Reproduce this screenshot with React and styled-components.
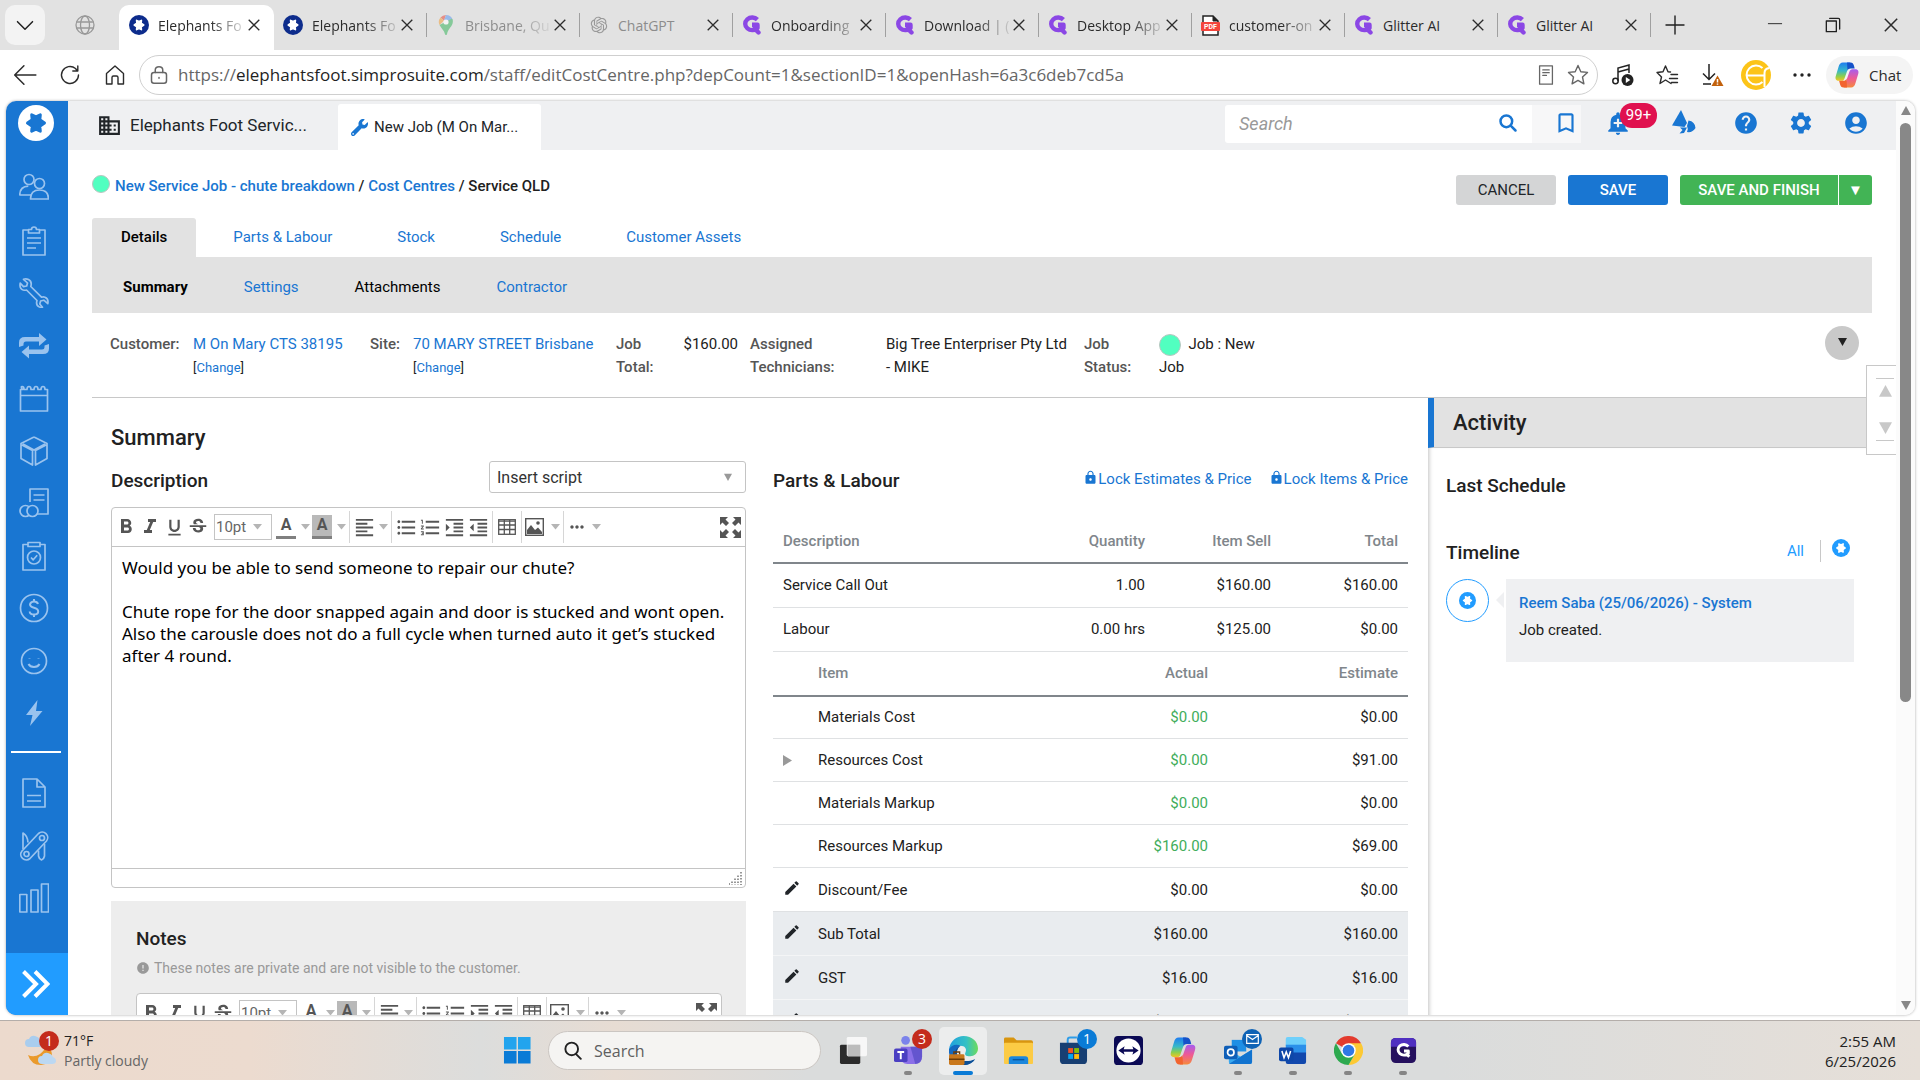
import { useState } from "react";
import styled, { createGlobalStyle, css } from "styled-components";
import {
  MdBusiness,
  MdAddAlert,
  MdHelp,
  MdSettings,
  MdAccountCircle,
  MdBookmarkBorder,
  MdEdit,
  MdError,
  MdLock,
  MdFormatBold,
  MdFormatItalic,
  MdFormatUnderlined,
  MdStrikethroughS,
  MdFormatAlignLeft,
  MdFormatListBulleted,
  MdFormatListNumbered,
  MdFormatIndentIncrease,
  MdFormatIndentDecrease,
  MdMoreHoriz,
} from "react-icons/md";
import { FaWrench } from "react-icons/fa";
import { RiOpenaiFill } from "react-icons/ri";

const GlobalStyle = createGlobalStyle`
  * { box-sizing: border-box; }
  body {
    margin: 0;
    background: #fff;
    color: #212121;
    font-family: Roboto, sans-serif;
    font-size: 15px;
  }
  button, input, select, textarea {
    font: inherit;
    color: inherit;
    margin: 0;
  }
  button {
    border: none;
    background: none;
    padding: 0;
    cursor: pointer;
  }
  a { color: #1976d2; text-decoration: none; }
  svg { display: block; flex: none; }
`;

const Screen = styled.div`
  height: 100vh;
  display: flex;
  flex-direction: column;
  overflow: hidden;
`;

/* ---------- browser chrome ---------- */

const TabStrip = styled.div`
  display: flex;
  align-items: stretch;
  height: 50px;
  padding: 5px 0 0 5px;
  background: #e2e2e2;
  font-family: "Open Sans", sans-serif;
  font-size: 14px;
`;

const TabMenuButton = styled.button`
  width: 40px;
  height: 40px;
  border-radius: 10px;
  background: #f3f3f3;
  display: grid;
  place-items: center;
`;

const PinnedTab = styled.div`
  width: 74px;
  display: grid;
  place-items: center;
  padding: 0 0 5px 6px;
`;

const TabItem = styled.div`
  flex: 0 1 ${({ $active }) => ($active ? 155 : 153)}px;
  min-width: 0;
  display: flex;
  align-items: center;
  gap: 9px;
  padding: 0 14px 5px ${({ $active }) => ($active ? 10 : 9)}px;
  color: ${({ $muted }) => ($muted ? "#8c8c8c" : "#2b2b2b")};
  background: ${({ $active }) => ($active ? "#fff" : "transparent")};
  border-radius: 10px 10px 0 0;
  position: relative;
  ${({ $line }) =>
    $line &&
    css`
      &::after {
        content: "";
        position: absolute;
        right: 0;
        top: 8px;
        height: 24px;
        border-right: 1px solid #a0a0a0;
      }
    `}
`;

const TabTitle = styled.span`
  flex: 1;
  white-space: nowrap;
  ${({ $fade }) =>
    $fade &&
    css`
      mask-image: linear-gradient(90deg, #000 60%, transparent 105%);
    `}
`;

const IconButton = styled.button`
  width: ${({ $w }) => $w || 28}px;
  flex: none;
  display: grid;
  place-items: center;
`;

const TabClose = styled(IconButton)`
  margin-left: -6px;
`;

const NewTab = styled(IconButton)`
  padding-bottom: 5px;
`;

const WindowControls = styled.div`
  margin-left: auto;
  display: flex;
  padding-bottom: 5px;
`;

const AddressRow = styled.div`
  display: flex;
  align-items: center;
  height: 51px;
  padding: 0 7px 2px 3px;
  color: #2b2b2b;
  font-family: "Open Sans", sans-serif;
`;

const AddressBar = styled.div`
  flex: 1;
  height: 40px;
  display: flex;
  align-items: center;
  gap: 9px;
  margin: 0 3px 0 2px;
  padding: 0 7px 0 9px;
  border: 1px solid #cfcfcf;
  border-radius: 20px;
  color: #666;
`;

const Url = styled.span`
  flex: 1;
  font-size: 17px;
  white-space: nowrap;
  b {
    font-weight: 400;
    color: #1f1f1f;
  }
`;

const ChatPill = styled.button`
  display: flex;
  align-items: center;
  gap: 8px;
  height: 38px;
  width: 87px;
  padding-left: 7px;
  border-radius: 19px;
  background: #f4f4f4;
  font-size: 15px;
`;

/* ---------- simPRO page ---------- */

const PageFrame = styled.div`
  flex: 1;
  min-height: 0;
  margin: 0 5px 5px 6px;
  display: flex;
  overflow: hidden;
  border-radius: 10px;
  box-shadow: 0 0 3px rgba(0, 0, 0, 0.35);
`;

const Sidebar = styled.nav`
  width: 62px;
  flex: none;
  display: flex;
  flex-direction: column;
  align-items: flex-start;
  background: #1976d2;
  color: #9ac3ee;
`;

const SidebarLogo = styled.a`
  margin: 4px 0 21px 12px;
  height: 36px;
`;

const SidebarLink = styled.a`
  width: 56px;
  height: 52px;
  display: grid;
  place-items: center;
  margin-top: ${({ $gap }) => ($gap ? 1 : 0)}px;
  color: inherit;
`;

const SidebarRule = styled.hr`
  width: 50px;
  margin: 12px 0 14px 5px;
  border: none;
  border-top: 2px solid #fff;
`;

const SidebarExpand = styled.button`
  margin-top: auto;
  width: 100%;
  height: 62px;
  display: grid;
  place-items: center;
  padding-right: 2px;
  background: #219cff;
  color: #fff;
`;

const Page = styled.div`
  flex: 1;
  min-width: 0;
  display: flex;
  flex-direction: column;
  position: relative;
`;

const TopBar = styled.header`
  height: 49px;
  flex: none;
  display: flex;
  align-items: flex-end;
  background: #eff0f2;
  color: #1976d2;
`;

const CompanyName = styled.div`
  width: 269px;
  height: 46px;
  display: flex;
  align-items: center;
  gap: 8px;
  padding: 0 0 4px 29px;
  font-size: 17px;
  color: #212529;
`;

const JobTab = styled.div`
  width: 203px;
  height: 46px;
  display: flex;
  align-items: center;
  gap: 6px;
  padding-left: 13px;
  margin-left: 1px;
  background: #fff;
  border-radius: 3px 3px 0 0;
  color: #1976d2;
  span {
    color: #212529;
  }
`;

const SearchBox = styled.form`
  align-self: flex-start;
  margin: 4px 0 0 auto;
  display: flex;
  align-items: center;
  width: 307px;
  height: 38px;
  padding: 0 14px 2px;
  background: #fff;
  border-radius: 3px 0 0 3px;
  input {
    flex: 1;
    min-width: 0;
    border: none;
    outline: none;
    padding: 0;
    font-size: 18px;
    &::placeholder {
      color: #999;
      font-style: italic;
    }
  }
`;

const BookmarkButton = styled.button`
  align-self: flex-start;
  margin: 4px 24px 0 0;
  width: 49px;
  height: 38px;
  padding: 0 0 2px 21px;
  background: #f7f7f8;
`;

const TopIcons = styled.div`
  display: flex;
  gap: 27px;
  padding: 0 25px 14px 0;
`;

const TopIcon = styled.button`
  position: relative;
  width: ${({ $w }) => $w || 28}px;
  display: flex;
`;

const AlertBadge = styled.span`
  position: absolute;
  left: 15px;
  top: -7px;
  width: 37px;
  height: 25px;
  border-radius: 12px;
  background: #e0114f;
  color: #fff;
  line-height: 25px;
`;

const Content = styled.main`
  flex: 1;
  min-height: 0;
  padding: 0 24px;
  background: #fff;
`;

const TitleRow = styled.div`
  display: flex;
  justify-content: space-between;
  padding-top: 25px;
  height: 68px;
`;

const Breadcrumb = styled.div`
  display: flex;
  align-items: flex-start;
  gap: 5px;
  font-weight: 500;
  line-height: 22px;
`;

const StatusDot = styled.span`
  display: inline-block;
  flex: none;
  width: ${({ $size }) => $size}px;
  height: ${({ $size }) => $size}px;
  border: 1px solid #b9c6c1;
  border-radius: 50%;
  background: #51ffc0;
  vertical-align: middle;
`;

const Actions = styled.div`
  display: flex;
  gap: 12px;
`;

const ActionButton = styled.button`
  height: 30px;
  width: ${({ $w }) => $w || 100}px;
  border-radius: 3px;
  background: ${({ $bg }) => $bg};
  color: ${({ $fg }) => $fg || "#fff"};
  font-weight: ${({ $fg }) => ($fg ? 400 : 500)};
`;

const SplitButton = styled.div`
  display: flex;
  gap: 1px;
  ${ActionButton}:first-child {
    border-radius: 3px 0 0 3px;
  }
  ${ActionButton}:last-child {
    border-radius: 0 3px 3px 0;
  }
`;

const MainTabs = styled.nav`
  display: flex;
  gap: 9px;
  height: 39px;
`;

const MainTab = styled.a`
  height: 39px;
  line-height: 38px;
  padding: 0 ${({ $on }) => ($on ? 29 : 28)}px;
  border-radius: 3px 3px 0 0;
  ${({ $on }) =>
    $on &&
    css`
      background: #e2e2e2;
      color: #000;
      font-weight: 500;
    `}
`;

const SubTabs = styled.nav`
  display: flex;
  gap: 56px;
  height: 56px;
  padding: 0 31px;
  background: #e2e2e2;
  line-height: 60px;
`;

const SubTab = styled.a`
  color: ${({ $dark }) => ($dark ? "#000" : "#1976d2")};
  font-weight: ${({ $on }) => ($on ? 700 : 400)};
`;

const InfoRow = styled.section`
  display: grid;
  grid-template-columns: 83px 177px 43px 203px 67px 67px 136px 198px 75px 130px 1fr;
  height: 85px;
  padding: 20px 13px 0 18px;
  border-bottom: 1px solid #c8c8c8;
  line-height: 23px;
`;

const InfoLabel = styled.div`
  color: #555;
  font-weight: 500;
`;

const InfoValue = styled.div`
  padding-right: 12px;
  text-align: ${({ $right }) => ($right ? "right" : "left")};
  small {
    display: block;
    font-size: 13px;
  }
`;

const RoundButton = styled.button`
  justify-self: end;
  width: 34px;
  height: 34px;
  margin-top: -7px;
  padding-bottom: 3px;
  border-radius: 50%;
  background: #c9c9c9;
  display: grid;
  place-items: center;
`;

const Columns = styled.div`
  display: flex;
  align-items: flex-start;
`;

const Work = styled.div`
  flex: 1;
  min-width: 0;
  padding: 25px 20px 0 19px;
`;

const Split = styled.div`
  display: grid;
  grid-template-columns: 1fr 1fr;
  gap: 27px;
`;

const PageHeading = styled.h1`
  margin: 0;
  font-size: 22px;
  line-height: 30px;
  font-weight: 500;
`;

const Heading = styled.h2`
  margin: 0;
  font-size: 19px;
  line-height: 24px;
  font-weight: 500;
`;

const HeadRow = styled.div`
  display: flex;
  justify-content: space-between;
  align-items: flex-end;
  height: 40px;
`;

const ScriptSelect = styled.div`
  width: 257px;
  height: 32px;
  display: grid;
  align-items: center;
  border: 1px solid #c4c4c4;
  border-radius: 3px;
  select {
    grid-area: 1 / 1;
    height: 30px;
    padding: 0 7px;
    appearance: none;
    border: none;
    background: none;
    font-size: 16px;
    color: #333;
  }
  svg {
    grid-area: 1 / 1;
    justify-self: end;
    margin-right: 13px;
    color: #999;
    pointer-events: none;
  }
`;

const EditorBox = styled.div`
  margin-top: 14px;
  border: 1px solid #c4c4c4;
  border-radius: 4px;
  background: #fff;
`;

const Toolbar = styled.div`
  display: flex;
  align-items: center;
  height: 39px;
  color: #555;
  border-bottom: 1px solid #c4c4c4;
`;

const ToolGroup = styled.div`
  display: flex;
  align-items: center;
  height: 32px;
  padding: 0 2px;
  border-right: ${({ $last }) => ($last ? "none" : "1px solid #d6d6d6")};
`;

const ToolButton = styled.button`
  width: ${({ $w }) => $w || 24}px;
  height: 26px;
  display: flex;
  align-items: center;
  justify-content: ${({ $w }) => ($w ? "space-between" : "center")};
  padding: 0 1px;
`;

const LetterA = styled.span`
  width: 20px;
  height: 24px;
  border-bottom: 3px solid #808080;
  background: ${({ $fill }) => ($fill ? "#b9b9b9" : "none")};
  font-weight: 700;
  font-size: 16px;
  line-height: 20px;
`;

const SizeSelect = styled.div`
  display: grid;
  align-items: center;
  width: 58px;
  height: 26px;
  margin: 0 3px 0 4px;
  border: 1px solid #c4c4c4;
  select {
    grid-area: 1 / 1;
    width: 100%;
    height: 24px;
    padding: 0 1px;
    appearance: none;
    border: none;
    background: none;
    color: #666;
  }
  svg {
    grid-area: 1 / 1;
    justify-self: end;
    margin-right: 9px;
    pointer-events: none;
  }
`;

const Expand = styled.button`
  margin-left: auto;
  padding-right: 4px;
`;

const EditorText = styled.textarea`
  display: block;
  width: 100%;
  height: 321px;
  padding: 10px 8px 0 10px;
  border: none;
  outline: none;
  resize: none;
  overflow: hidden;
  background: none;
  color: #000;
  font-family: "Noto Sans", sans-serif;
  font-size: 17px;
  line-height: 22px;
`;

const EditorStatus = styled.div`
  height: 19px;
  border-top: 1px solid #c4c4c4;
  display: flex;
  justify-content: flex-end;
  align-items: center;
  padding-right: 3px;
`;

const Notes = styled.section`
  margin-top: 13px;
  padding: 26px 24px 60px 25px;
  background: #ededed;
  p {
    display: flex;
    align-items: center;
    gap: 4px;
    margin: 6px 0 0;
    font-size: 14px;
    line-height: 22px;
    color: #999;
  }
`;

const LockLinks = styled.div`
  display: flex;
  gap: 17px;
  padding-bottom: 4px;
  a {
    display: flex;
    align-items: center;
    line-height: 20px;
  }
  svg {
    margin-bottom: 3px;
  }
`;

const TableStack = styled.div`
  margin-top: 26px;
`;

const DataTable = styled.table`
  width: 100%;
  table-layout: fixed;
  border-collapse: collapse;
  th,
  td {
    height: 44px;
    padding: 0 10px;
    text-align: right;
    white-space: nowrap;
  }
  th {
    color: #80868b;
    font-weight: 500;
    border-bottom: 2px solid #80868b;
  }
  td {
    border-bottom: 1px solid #dfe1e3;
  }
  .name {
    text-align: left;
  }
`;

const MoneyRow = styled.tr`
  background: ${({ $shaded }) => ($shaded ? "#e9ecef" : "none")};
  td {
    height: ${({ $edit }) => ($edit ? 44 : 43)}px;
    border-color: ${({ $shaded }) => ($shaded ? "#f4f5f6" : "#dfe1e3")};
  }
  .actual {
    color: ${({ $good }) => ($good ? "#41ad5b" : "inherit")};
  }
`;

const EditButton = styled.button`
  display: block;
  padding-bottom: 4px;
  color: #212529;
`;

const Activity = styled.aside`
  width: 444px;
  flex: none;
`;

const ActivityHead = styled.h1`
  margin: 0;
  height: 50px;
  padding-left: 19px;
  border-left: 6px solid #1976d2;
  border-bottom: 1px solid #c8c8c8;
  background: #e2e2e2;
  font-size: 22px;
  line-height: 49px;
  font-weight: 500;
`;

const ActivityBody = styled.div`
  height: 640px;
  padding: 26px 18px 0;
  box-shadow: inset 4px 0 4px -3px rgba(0, 0, 0, 0.25);
`;

const TimelineHead = styled.div`
  display: flex;
  align-items: flex-end;
  margin-top: 41px;
  padding-right: 4px;
  h2 {
    flex: 1;
  }
  a {
    color: #219cff;
    line-height: 22px;
    padding-right: 16px;
    margin: 0 11px 3px 0;
    border-right: 1px solid #c8c8c8;
  }
  svg {
    margin-bottom: 8px;
  }
`;

const TimelineItem = styled.div`
  display: flex;
  margin-top: 14px;
`;

const Avatar = styled.div`
  width: 43px;
  height: 43px;
  border: 1px solid #219cff;
  border-radius: 50%;
  display: grid;
  place-items: center;
`;

const Pointer = styled.span`
  margin: 13px 2px 0 7px;
  height: 16px;
  border: 8px solid transparent;
  border-left: none;
  border-right-color: #eff0f2;
`;

const TimelineCard = styled.div`
  flex: 1;
  height: 83px;
  padding: 11px 13px;
  background: #eff0f2;
  line-height: 29px;
  a {
    display: block;
    font-weight: 500;
    line-height: 26px;
  }
`;

const ScrollPad = styled.div`
  position: absolute;
  right: 0;
  top: 264px;
  width: 30px;
  height: 90px;
  padding: 12px 2px 13px 9px;
  background: #fff;
  border: 1px solid #c8c8c8;
  border-right: none;
  color: #c8c8c8;
  display: flex;
  flex-direction: column;
  button {
    flex: 1;
    display: grid;
    place-items: center;
    color: inherit;
  }
  button:first-child {
    border-top: 1px solid #c8c8c8;
    padding-bottom: 5px;
  }
  button:last-child {
    border-bottom: 1px solid #c8c8c8;
    padding-top: 5px;
  }
`;

const Scrollbar = styled.div`
  width: 19px;
  flex: none;
  display: flex;
  flex-direction: column;
  align-items: center;
  padding: 5px 0;
  background: #fbfbfb;
  color: #888;
`;

const ScrollThumb = styled.div`
  width: 11px;
  height: 64%;
  margin: 7px 0 auto;
  border-radius: 6px;
  background: #888;
`;

/* ---------- taskbar ---------- */

const Taskbar = styled.footer`
  position: relative;
  height: 60px;
  flex: none;
  display: flex;
  align-items: center;
  justify-content: space-between;
  padding: 0 24px 0 25px;
  border-top: 1px solid #b4aeaa;
  background: linear-gradient(
    90deg,
    #ecdacd 0%,
    #ecdbcf 13%,
    #dcdddc 25%,
    #e7dcd3 32%,
    #dadcdc 42%,
    #dadcdc 75%,
    #e6dfd8 100%
  );
  font-family: "Open Sans", sans-serif;
  font-size: 14px;
`;

const Weather = styled.div`
  display: flex;
  align-items: center;
  gap: 6px;
  line-height: 20px;
  small {
    display: block;
    font-size: 14px;
    color: #666;
  }
`;

const TaskApps = styled.div`
  position: absolute;
  left: 50%;
  transform: translateX(-50%);
  display: flex;
  align-items: center;
  gap: 7px;
`;

const TaskSearch = styled.label`
  width: 273px;
  height: 39px;
  margin-right: 1px;
  display: flex;
  align-items: center;
  gap: 12px;
  padding: 0 14px;
  border: 1px solid #cbc6c2;
  border-radius: 20px;
  background: #f5f4f2;
  input {
    flex: 1;
    min-width: 0;
    border: none;
    outline: none;
    background: none;
    padding: 0;
    font-size: 16px;
    &::placeholder {
      color: #5f5f5f;
    }
  }
`;

const TaskButton = styled.button`
  position: relative;
  width: 48px;
  height: 48px;
  display: grid;
  place-items: center;
  border-radius: 5px;
  background: ${({ $active }) => ($active ? "#eceded" : "none")};
  &::after {
    content: "";
    position: absolute;
    bottom: 0;
    left: 50%;
    height: 4px;
    width: ${({ $active }) => ($active ? 20 : 8)}px;
    margin-left: ${({ $active }) => ($active ? -10 : -4)}px;
    border-radius: 2px;
    background: ${({ $active, $open }) => ($active ? "#0a7bd6" : $open ? "#858585" : "none")};
  }
`;

const Badge = styled.span`
  position: absolute;
  right: ${({ $right }) => $right || 0}px;
  top: ${({ $top }) => $top || 0}px;
  width: 20px;
  height: 20px;
  border-radius: 50%;
  background: ${({ $bg }) => $bg};
  color: #fff;
  line-height: 20px;
  display: grid;
  place-items: center;
`;

const WeatherIcon = styled.div`
  position: relative;
  width: 33px;
  height: 36px;
`;

const Clock = styled.div`
  text-align: right;
  font-size: 15px;
  line-height: 20px;
`;

/* ---------- drawings ---------- */

const STAR =
  "M26.5 18 21.8 21.3 22.3 26.2 18 24.2 13.7 26.2 14.2 21.3 9.5 18 14.2 14.7 13.7 9.8 18 11.8 22.3 9.8 21.8 14.7Z";

function StarMark({ size, ring, star }) {
  return (
    <svg width={size} height={size} viewBox="0 0 36 36">
      <circle cx="18" cy="18" r="18" fill={ring} />
      <path d={STAR} fill={star} stroke={star} strokeWidth="3" strokeLinejoin="round" />
    </svg>
  );
}

function Caret({ size = 10, up }) {
  return (
    <svg width={size} height={size} viewBox="0 0 10 10" fill="currentColor">
      <path d={up ? "M0 9 5 0l5 9Z" : "M0 1h10L5 10Z"} />
    </svg>
  );
}

function SmallCaret() {
  return (
    <svg width="9" height="6" viewBox="0 0 9 6" fill="#b5b5b5">
      <path d="M0 0h9L4.5 5.5Z" />
    </svg>
  );
}

function Cross({ size = 12 }) {
  return (
    <svg width={size} height={size} viewBox="0 0 12 12" stroke="#2b2b2b" strokeWidth="1.3">
      <path d="m.7.7 10.6 10.6M11.3.7.7 11.3" />
    </svg>
  );
}

function Line({ size = 22, w = 1.4, children }) {
  return (
    <svg
      width={size}
      height={size}
      viewBox="0 0 24 24"
      fill="none"
      stroke="currentColor"
      strokeWidth={w}
      strokeLinecap="round"
      strokeLinejoin="round"
    >
      {children}
    </svg>
  );
}

function MapsPin() {
  return (
    <svg width="20" height="20" viewBox="0 0 20 20" opacity=".6">
      <path d="M10 0a7 7 0 0 0-5.5 2.6L8 5.8Z" fill="#e8594c" />
      <path d="M4.5 2.6A7 7 0 0 0 3.5 10L8 5.8Z" fill="#f0a54a" />
      <path d="M10 0a7 7 0 0 1 6.7 5L12 9 8 5.5Z" fill="#6aa0f0" />
      <path d="M16.7 5c1.2 6-4.7 8-5.7 14.2-.3 1.1-1.7 1.1-2 0-.8-4-3.8-5.7-5.5-9.2L16 3.6Z" fill="#48b96a" />
      <circle cx="10" cy="7" r="2.6" fill="#fff" />
    </svg>
  );
}

function GlitterMark() {
  return (
    <svg width="20" height="20" viewBox="0 0 20 20" fill="none" stroke="#8b47e5" strokeWidth="4.4" strokeLinejoin="round">
      <path d="M15.4 4.6A7 6.3 0 1 0 15.5 13V9.8H10" />
      <path d="M12.500 13.500 16.500 17.500" strokeLinecap="round" />
    </svg>
  );
}

function PdfMark() {
  return (
    <svg width="19" height="21" viewBox="0 0 19 21">
      <path d="M2 1h10l5 5v14H2Z" fill="#fff" stroke="#222" strokeWidth="1.5" />
      <path d="M12 1v5h5" fill="#222" stroke="#222" />
      <rect y="7" width="19" height="9" rx="1" fill="#f4453c" />
      <text x="9.5" y="14" textAnchor="middle" fontSize="7" fontWeight="700" fontFamily="Roboto" fill="#fff">
        PDF
      </text>
    </svg>
  );
}

function CopilotMark({ size = 28 }) {
  return (
    <svg width={size} height={size} viewBox="0 0 28 28">
      <defs>
        <linearGradient id="cpA" x1="0" y1="0" x2="0" y2="1">
          <stop offset="0" stopColor="#1f7df0" />
          <stop offset=".45" stopColor="#36b8c9" />
          <stop offset=".75" stopColor="#8ccf4d" />
          <stop offset="1" stopColor="#f3c522" />
        </linearGradient>
        <linearGradient id="cpB" x1="0" y1="0" x2="0" y2="1">
          <stop offset="0" stopColor="#a55cf0" />
          <stop offset=".5" stopColor="#ee5a95" />
          <stop offset="1" stopColor="#f58a3c" />
        </linearGradient>
      </defs>
      <path
        d="M17 1.5h-7C7.5 1.5 6.3 3.2 5.5 6L2.8 15c-.9 3 .2 4.800 3.200 4.800h2.600c1.600 0 2.500-.9 3-2.600L15 7.500Z"
        fill="url(#cpA)"
      />
      <path d="M14 1.500h3.500c2 0 2.800 1.200 3.400 3l.8 3h-4c-1.700 0-2.700.7-3.200 2.300Z" fill="#1552c9" />
      <path
        d="M11 26.500h7c2.500 0 3.700-1.700 4.500-4.500l2.700-9c.9-3-.2-4.800-3.200-4.800h-2.600c-1.600 0-2.500.9-3 2.600L13 20.500Z"
        fill="url(#cpB)"
      />
      <path d="M14 26.500h-3.500c-2 0-2.800-1.200-3.400-3l-1-3.700h4.200c1.700 0 2.700-.7 3.200-2.300Z" fill="#f2642f" />
    </svg>
  );
}

function ExtensionMark() {
  return (
    <svg width="30" height="30" viewBox="0 0 30 30">
      <circle cx="15" cy="15" r="15" fill="#fcc419" />
      <path
        d="M21.5 8A9.500 9.500 0 1 0 21.500 22M6 15.500h17.500M23.500 27V13q0-4.500 5-5"
        fill="none"
        stroke="#fff"
        strokeWidth="2"
      />
    </svg>
  );
}

function Megaphone() {
  return (
    <svg width="24" height="24" viewBox="0 0 24 24" fill="currentColor">
      <path d="M9 0 0 15.500 12.500 17 15 13Z" />
      <path d="M8 17.500 10.500 20l-3 3.500 4.500-.5 3-5.500Z" />
      <path d="M16.500 10.500q6.500 1 7 7.500-3 5-8.500 4 1.500-3.500 0-6Z" />
    </svg>
  );
}

function ExpandIcon() {
  return (
    <svg width="21" height="21" viewBox="0 0 21 21" fill="currentColor">
      <path d="M0 0h8L5.500 2.500 9 6 6 9 2.500 5.500 0 8ZM21 0h-8l2.500 2.500L12 6l3 3 3.500-3.500L21 8ZM0 21h8l-2.500-2.500L9 15l-3-3-3.500 3.500L0 13ZM21 21h-8l2.500-2.500L12 15l3-3 3.500 3.500L21 13Z" />
    </svg>
  );
}

function TableIcon() {
  return (
    <svg width="18" height="16" viewBox="0 0 18 16" fill="none" stroke="currentColor" strokeWidth="1.3">
      <rect x=".7" y=".7" width="16.6" height="14.6" />
      <path d="M.7 2.200h16.600M.7 6h16.600M.7 10.500h16.600M6.300 1v14M11.700 1v14" />
    </svg>
  );
}

function ImageIcon() {
  return (
    <svg width="19" height="18" viewBox="0 0 19 18">
      <rect x=".7" y=".7" width="17.6" height="16.6" fill="none" stroke="currentColor" strokeWidth="1.4" />
      <path d="M2 16v-4l4-5 4 5 3-2.500 4 4.500v2Z" fill="currentColor" />
      <circle cx="13" cy="5" r="1.8" fill="currentColor" />
    </svg>
  );
}

function ResizeGrip() {
  return (
    <svg width="13" height="13" viewBox="0 0 13 13" stroke="#777" strokeWidth="1.5" strokeDasharray="1.5 1.5">
      <path d="M12 0v13M9 3.500v9.500M6 6.500V13M3 9.500V13M0 12h1" />
    </svg>
  );
}

const NAV_ICONS = {
  People: (
    <>
      <circle cx="10" cy="6.5" r="5" />
      <path d="M12.500 22H.8q0-8.500 8.500-8.800" />
      <circle cx="20.5" cy="10.5" r="5" />
      <path d="M11.500 26q0-9 9-9t9 9Z" />
    </>
  ),
  Quotes: (
    <path d="M9.500 4H4v25h22V4h-5.500M9.500 3.500h3q0-2.500 2.500-2.500t2.500 2.500h3V7h-11ZM8 12h14M8 17h14M8 22h9" />
  ),
  Jobs: (
    <path d="M4.500 1.300 8.500 5l-.8 3L4.500 8.700 1.200 5.200q-1 5.500 3 6.800 1.800.5 3.300 0L18 22.500q-1.500 5 2.500 6.500 1.500.5 3 .2L20.800 26l.8-3 3.200-.8 4 3.500q1-5-2.800-6.500-1.800-.6-3.500 0L11.800 8.500q1.500-5-2.300-7Q7 .5 4.500 1.300Z" />
  ),
  Recurring: (
    <path
      d="M0 16v-4.500Q0 6 6 6h14V2l7.500 6.500L20 15v-4.500H7Q4.500 10.500 4.500 13v1.500ZM30 13v4.500q0 5.500-6 5.500H10v4.500L2.500 21 10 14.500v4h13q2.500 0 2.500-2.500v-1.500Z"
      fill="currentColor"
      stroke="none"
    />
  ),
  Schedules: (
    <path d="M1.500 6.500V28h27V6.500h-2.500q0-3-2-3t-2 3h-3q0-3-2-3t-2 3h-3q0-3-2-3t-2 3h-3q0-3-1.800-3T3.500 6.500ZM1.500 12.500h27" />
  ),
  Stock: (
    <path d="M15 1 28 7.500v15L16.500 29V14.500L28 8.500M15 1 2 7.500v15L13.500 29V14.500L2 8.500M4 8l11 6 11-6" />
  ),
  Invoices: (
    <>
      <path d="M11 14V1h18v25H18M14.500 7h11M14.500 12h11" />
      <circle cx="6.5" cy="23" r="5.5" />
      <circle cx="13.5" cy="23" r="5.5" fill="#1976d2" />
    </>
  ),
  Tasks: (
    <>
      <path d="M9 3.500H4V29h22V3.500h-5M9 1.500h12v4H9Z" />
      <circle cx="15" cy="16.5" r="6.5" />
      <path d="m12 16.500 2.200 2.300 4-4.500" />
    </>
  ),
  Payments: (
    <>
      <circle cx="15" cy="15" r="13.5" />
      <path
        d="M19 11q-.8-2.500-4-2.500t-4 2.800q0 2.600 4 3.500t4.200 3.700q0 3-4.200 3t-4.300-3M15 6v2.500M15 21.500V24"
        strokeWidth="2"
      />
    </>
  ),
  Contacts: (
    <>
      <circle cx="15" cy="15" r="12.5" />
      <path d="M9.500 18q1.500 3 5.500 3t5.500-3M10.500 12v.5M19.500 12v.5" strokeWidth="2" />
    </>
  ),
  Utilities: <path d="M18.500 2 7 17h6.500L11 28 23.500 13H17Z" fill="currentColor" stroke="none" />,
  Forms: <path d="M4 1h14l8 8v20H4ZM18 1v8h8M8 17.500h14M8 23h14" />,
  Tools: (
    <>
      <path d="M3 20 19.500 2.500a5.500 5.500 0 0 1 8 7.500L11 27.500A5.500 5.500 0 0 1 3 20Z" />
      <circle cx="23" cy="7" r="2.5" />
      <circle cx="7.5" cy="23" r="2.5" />
      <path d="M4 18V2q4.500 2.500 5 9.500M25.500 13v12q-.5 3-3 4-2.500-1-3-4v-5.500" />
    </>
  ),
  Reports: <path d="M.8 11.500h7V29h-7ZM12 7h7v22h-7ZM22.500 1h7v28h-7Z" />,
};

function NavIcon({ name }) {
  return (
    <svg
      width="30"
      height="30"
      viewBox="0 0 30 30"
      fill="none"
      stroke="currentColor"
      strokeWidth="1.7"
      strokeLinejoin="round"
    >
      {NAV_ICONS[name]}
    </svg>
  );
}

const TOP_NAV = [
  "People",
  "Quotes",
  "Jobs",
  "Recurring",
  "Schedules",
  "Stock",
  "Invoices",
  "Tasks",
  "Payments",
  "Contacts",
  "Utilities",
];
const BOTTOM_NAV = ["Forms", "Tools", "Reports"];

/* task bar logos, all on a 30 unit square */
const APP_ICONS = {
  start: (
    <>
      <path d="M1 1h13v13H1ZM15.500 1h13v13h-13Z" fill="#22a4ee" />
      <path d="M1 15.500h13v13H1ZM15.500 15.500h13v13h-13Z" fill="#0a7bd6" />
    </>
  ),
  taskview: (
    <>
      <rect x="1" y="9" width="21" height="20" rx="1.5" fill="#2b2b2b" />
      <rect x="8" y="1" width="21" height="20" rx="1.5" fill="#fafafa" opacity=".9" />
      <path d="M9 9h13v12H9Z" fill="#bcbcbc" />
    </>
  ),
  teams: (
    <>
      <circle cx="12" cy="4.5" r="4.5" fill="#7b83eb" />
      <path d="M7 11h20q2 0 2 2v8q0 8-8 8H14q-7 0-7-8Z" fill="#8a6fe8" />
      <path d="M17 11h10q2 0 2 2v8q0 7-7 8Z" fill="#6455cf" />
      <rect y="13" width="14" height="14" rx="2" fill="#4a3fc2" />
      <path d="M3.500 16.500h7M7 16.500V24" stroke="#fff" strokeWidth="2" />
    </>
  ),
  edge: (
    <>
      <defs>
        <linearGradient id="edgeTop" x1="0" y1="0" x2="1" y2="0">
          <stop offset="0" stopColor="#1f9fe0" />
          <stop offset=".6" stopColor="#35c1c4" />
          <stop offset="1" stopColor="#6ddb5b" />
        </linearGradient>
      </defs>
      <path
        d="M0 14C1 5 8 0 15 0c9 0 15 6 15 13 0 5-4 8-8 8-5 0-6-2-5-4 2-4-1-7-5-7-6 0-11 3-12 7Z"
        fill="url(#edgeTop)"
      />
      <path d="M0 14C2 9 8 8 12 10c-3 2-5 5-4 10 1 4 5 7 10 7 3 0 6-1 9-3-3 4-7 6-12 6C6 30-1 23 0 14Z" fill="#1469c0" />
      <path d="M12 10c-3 2-5 6-3 11 2 4 8 7 18 3-4 6-13 8-18 4-5-5-5-14 3-18Z" fill="#0c4f96" />
      <rect y="19" width="16" height="11" rx="1.5" fill="#c9781c" />
      <path d="M5 19v-2.500h6V19M0 24h16" fill="none" stroke="#6e3c07" strokeWidth="1.4" />
    </>
  ),
  files: (
    <>
      <path d="M0 3q0-1.500 1.500-1.500H10l3 3h15q2 0 2 2V12H0Z" fill="#d8950f" />
      <path d="M0 8q0-1 1-1h28q1 0 1 1v20q0 1-1 1H1q-1 0-1-1Z" fill="#fccb45" />
      <path d="M5 29v-5q0-3 3-3h14q3 0 3 3v5Z" fill="#1b87dd" />
      <path d="M9 24.500h12" stroke="#0b58a0" strokeWidth="1.5" />
    </>
  ),
  store: (
    <>
      <path d="M9 8V4q0-2.500 2.500-2.500h7" fill="none" stroke="#2f9de8" strokeWidth="2" />
      <path d="M1 7h28v18q0 4-4 4H5q-4 0-4-4Z" fill="#173f73" />
      <path d="M9.500 12.500h5v5h-5Z" fill="#f35325" />
      <path d="M15.700 12.500h5v5h-5Z" fill="#81bc06" />
      <path d="M9.500 18.700h5v5h-5Z" fill="#05a6f0" />
      <path d="M15.700 18.700h5v5h-5Z" fill="#ffba08" />
    </>
  ),
  teamviewer: (
    <>
      <rect width="30" height="30" rx="4" fill="#0b0a55" />
      <circle cx="15" cy="15" r="12.5" fill="#fff" />
      <path
        d="M4.500 15 11 10.500l-1 3.200h10l-1-3.200 6.500 4.500-6.500 4.500 1-3.200H10l1 3.200Z"
        fill="#0b0a55"
      />
    </>
  ),
  outlook: (
    <>
      <path d="M8 4h15v12H8Z" fill="#1f8fe5" />
      <path d="M5 14 17 21.500 29 14v13q0 2-2 2H7q-2 0-2-2Z" fill="#39a9f0" />
      <path d="m5 29 24-15v13q0 2-2 2Z" fill="#1173cf" />
      <rect y="10" width="14" height="14" rx="2" fill="#0f5fb8" />
      <circle cx="7" cy="17" r="3.3" fill="none" stroke="#fff" strokeWidth="1.8" />
    </>
  ),
  word: (
    <>
      <path d="M7 3q0-2 2-2h15l4 3v6H7Z" fill="#6fd0fb" />
      <path d="M7 9h21v9H7Z" fill="#2b90ea" />
      <path d="M7 17h21v10q0 2-2 2H9q-2 0-2-2Z" fill="#1148ad" />
      <rect y="12" width="15" height="14" rx="2" fill="#0e47a8" />
      <path d="m3 15.500 2.200 7 2.300-6 2.300 6 2.200-7" fill="none" stroke="#fff" strokeWidth="1.6" />
    </>
  ),
  chrome: (
    <>
      <path d="M15 15 2 7.500A15 15 0 0 1 28 7.500Z" fill="#e33b2e" />
      <path d="M28 7.500A15 15 0 0 1 15 30l6.500-11.200L15 7.500Z" fill="#fcc934" />
      <path d="M2 7.500A15 15 0 0 0 15 30l6.500-11.200L8.500 18.800Z" fill="#2da94f" />
      <circle cx="15" cy="15" r="7.5" fill="#fff" />
      <circle cx="15" cy="15" r="6" fill="#2f78e6" />
    </>
  ),
  glitter: (
    <>
      <rect x="2" y="2" width="26" height="26" rx="5" fill="#25105e" />
      <path d="M7 2h16q5 0 5 5v4H2V7q0-5 5-5Z" fill="#4f2fc0" />
      <path
        d="M20 10.800a6 5.500 0 1 0 0 7v-2.300h-4.500M17.500 18l3.500 3.500"
        fill="none"
        stroke="#fff"
        strokeWidth="3"
        strokeLinejoin="round"
      />
    </>
  ),
};

function AppIcon({ name }) {
  return (
    <svg width="29" height="29" viewBox="0 0 30 30">
      {APP_ICONS[name]}
    </svg>
  );
}

/* ---------- data ---------- */

const navy = <StarMark size={20} ring="#0d2c8c" star="#fff" />;
const glitter = <GlitterMark />;

const TABS = [
  { icon: navy, title: "Elephants Fo", active: true, fade: true },
  { icon: navy, title: "Elephants Fo", line: true, fade: true },
  { icon: <MapsPin />, title: "Brisbane, Qu", muted: true, line: true, fade: true },
  { icon: <RiOpenaiFill size={20} color="#999" />, title: "ChatGPT", muted: true, line: true },
  { icon: glitter, title: "Onboarding", line: true, fade: true },
  { icon: glitter, title: "Download | (", line: true, fade: true },
  { icon: glitter, title: "Desktop App", line: true, fade: true },
  { icon: <PdfMark />, title: "customer-on", line: true, fade: true },
  { icon: glitter, title: "Glitter AI", line: true },
  { icon: glitter, title: "Glitter AI", line: true },
];

const SALES = [
  ["Service Call Out", "1.00", "$160.00", "$160.00"],
  ["Labour", "0.00 hrs", "$125.00", "$0.00"],
];

const COSTS = [
  { name: "Materials Cost", actual: "$0.00", estimate: "$0.00", good: true },
  { name: "Resources Cost", actual: "$0.00", estimate: "$91.00", good: true, expandable: true },
  { name: "Materials Markup", actual: "$0.00", estimate: "$0.00", good: true },
  { name: "Resources Markup", actual: "$160.00", estimate: "$69.00", good: true },
  { name: "Discount/Fee", actual: "$0.00", estimate: "$0.00", edit: true },
  { name: "Sub Total", actual: "$160.00", estimate: "$160.00", edit: true, shaded: true },
  { name: "GST", actual: "$16.00", estimate: "$16.00", edit: true, shaded: true },
  { name: "Total", actual: "$176.00", estimate: "$176.00", edit: true, shaded: true },
];

const DESCRIPTION = `Would you be able to send someone to repair our chute?

Chute rope for the door snapped again and door is stucked and wont open.
Also the carousle does not do a full cycle when turned auto it get’s stucked after 4 round.`;

/* ---------- parts ---------- */

function Browser() {
  return (
    <>
      <TabStrip>
        <TabMenuButton aria-label="Search tabs">
          <Line size={20} w={1.8}>
            <path d="m3 8 9 9 9-9" />
          </Line>
        </TabMenuButton>
        <PinnedTab>
          <svg width="20" height="20" viewBox="0 0 20 20" fill="none" stroke="#999" strokeWidth="1.3">
            <circle cx="10" cy="10" r="9" />
            <ellipse cx="10" cy="10" rx="4.5" ry="9" />
            <path d="M1.500 7h17M1.500 13h17" />
          </svg>
        </PinnedTab>
        {TABS.map((tab, index) => (
          <TabItem key={index} $active={tab.active} $muted={tab.muted} $line={tab.line}>
            {tab.icon}
            <TabTitle $fade={tab.fade}>{tab.title}</TabTitle>
            <TabClose $w={12} aria-label="Close tab">
              <Cross />
            </TabClose>
          </TabItem>
        ))}
        <NewTab $w={48} aria-label="New tab">
          <Line size={24}>
            <path d="M12 3v18M3 12h18" />
          </Line>
        </NewTab>
        <WindowControls>
          <IconButton $w={58} aria-label="Minimize">
            <Line size={16}>
              <path d="M2 10h20" />
            </Line>
          </IconButton>
          <IconButton $w={58} aria-label="Restore">
            <Line size={16} w={2}>
              <path d="M2 6h15v16H2ZM7 2h13q2 0 2 2v14" />
            </Line>
          </IconButton>
          <IconButton $w={58} aria-label="Close">
            <Cross size={14} />
          </IconButton>
        </WindowControls>
      </TabStrip>
      <AddressRow>
        <IconButton $w={44} aria-label="Back">
          <Line size={26}>
            <path d="M22 12H3M11 3.500 2.500 12l8.500 8.500" />
          </Line>
        </IconButton>
        <IconButton $w={45} aria-label="Refresh">
          <Line size={24}>
            <path d="M20.500 12a8.500 8.500 0 1 1-3-6.500L19.500 8M19.800 3v5h-5" />
          </Line>
        </IconButton>
        <IconButton $w={45} aria-label="Home">
          <Line size={24}>
            <path d="M3.500 10.500 12 3l8.500 7.500V21H15v-6.500q0-1.500-1.500-1.500h-3Q9 13 9 14.500V21H3.500Z" />
          </Line>
        </IconButton>
        <AddressBar>
          <Line size={20} w={1.8}>
            <rect x="3" y="9" width="18" height="13" rx="3" />
            <path d="M7.500 9V6q0-4 4.500-4t4.500 4v3M12 15v1" />
          </Line>
          <Url>
            https://<b>elephantsfoot.simprosuite.com</b>
            /staff/editCostCentre.php?depCount=1&amp;sectionID=1&amp;openHash=6a3c6deb7cd5a
          </Url>
          <Line size={22}>
            <path d="M5 2h14v20H5ZM8.500 6.500h7M8.500 9.500h7M8.500 12.500h4" />
          </Line>
          <Line size={24}>
            <path d="m12 2.500 2.800 6.200 6.700.7-5 4.600 1.400 6.800-5.900-3.400-5.900 3.400L7.500 14l-5-4.600 6.700-.7Z" />
          </Line>
        </AddressBar>
        <IconButton $w={44} aria-label="Media controls">
          <svg width="22" height="22" viewBox="0 0 22 22" fill="none" stroke="#222" strokeWidth="1.5">
            <path d="M6 17V4l11-3v8M6 8l11-3" />
            <circle cx="3.5" cy="17" r="2.7" />
            <circle cx="15.5" cy="16" r="6" fill="#222" stroke="none" />
            <path d="m13.800 13 4.500 3-4.500 3Z" fill="#fff" stroke="none" />
          </svg>
        </IconButton>
        <IconButton $w={44} aria-label="Favorites">
          <Line size={24}>
            <path d="M16 20.500 10.500 17 5 20.500 6.500 14 2 9.500l6-.8L10.500 3 13 8.700l2.500.3M16 11.500h6.500M14.500 15.500h8M16.500 19.500h6" />
          </Line>
        </IconButton>
        <IconButton $w={46} aria-label="Downloads">
          <svg width="24" height="24" viewBox="0 0 24 24" fill="none" stroke="#222" strokeWidth="1.5">
            <path d="M9 1v15M3 10.500l6 6 6-6M3 21h8" />
            <path d="M17.500 12.500 23.500 23h-12Z" fill="#c2610c" stroke="none" />
            <path d="M17.500 16v3.500M17.500 20.500v1.200" stroke="#fff" />
          </svg>
        </IconButton>
        <IconButton $w={42} aria-label="Extension">
          <ExtensionMark />
        </IconButton>
        <IconButton $w={49} aria-label="Settings and more">
          <svg width="18" height="4" viewBox="0 0 18 4" fill="#222">
            <circle cx="2" cy="2" r="1.7" />
            <circle cx="9" cy="2" r="1.7" />
            <circle cx="16" cy="2" r="1.7" />
          </svg>
        </IconButton>
        <ChatPill>
          <CopilotMark />
          Chat
        </ChatPill>
      </AddressRow>
    </>
  );
}

function EditorToolbar() {
  const [size, setSize] = useState("10pt");
  return (
    <Toolbar>
      <ToolGroup>
        <ToolButton aria-label="Bold">
          <MdFormatBold size={24} />
        </ToolButton>
        <ToolButton aria-label="Italic">
          <MdFormatItalic size={24} />
        </ToolButton>
        <ToolButton aria-label="Underline">
          <MdFormatUnderlined size={21} />
        </ToolButton>
        <ToolButton aria-label="Strikethrough">
          <MdStrikethroughS size={22} />
        </ToolButton>
        <SizeSelect>
          <select aria-label="Font size" value={size} onChange={(e) => setSize(e.target.value)}>
            <option>8pt</option>
            <option>10pt</option>
            <option>12pt</option>
          </select>
          <SmallCaret />
        </SizeSelect>
        <ToolButton $w={36} aria-label="Text color">
          <LetterA>A</LetterA>
          <SmallCaret />
        </ToolButton>
        <ToolButton $w={36} aria-label="Background color">
          <LetterA $fill>A</LetterA>
          <SmallCaret />
        </ToolButton>
      </ToolGroup>
      <ToolGroup>
        <ToolButton $w={37} aria-label="Alignment">
          <MdFormatAlignLeft size={23} />
          <SmallCaret />
        </ToolButton>
      </ToolGroup>
      <ToolGroup>
        <ToolButton aria-label="Bullet list">
          <MdFormatListBulleted size={23} />
        </ToolButton>
        <ToolButton aria-label="Numbered list">
          <MdFormatListNumbered size={23} />
        </ToolButton>
        <ToolButton aria-label="Increase indent">
          <MdFormatIndentIncrease size={23} />
        </ToolButton>
        <ToolButton aria-label="Decrease indent">
          <MdFormatIndentDecrease size={23} />
        </ToolButton>
      </ToolGroup>
      <ToolGroup>
        <ToolButton aria-label="Table">
          <TableIcon />
        </ToolButton>
      </ToolGroup>
      <ToolGroup>
        <ToolButton $w={37} aria-label="Image">
          <ImageIcon />
          <SmallCaret />
        </ToolButton>
      </ToolGroup>
      <ToolGroup $last>
        <ToolButton $w={36} aria-label="More">
          <MdMoreHoriz size={20} />
          <SmallCaret />
        </ToolButton>
      </ToolGroup>
      <Expand aria-label="Fullscreen">
        <ExpandIcon />
      </Expand>
    </Toolbar>
  );
}

function DescriptionPanel() {
  return (
    <section>
      <HeadRow>
        <Heading>Description</Heading>
        <ScriptSelect>
          <select aria-label="Insert script">
            <option>Insert script</option>
          </select>
          <Caret size={8} />
        </ScriptSelect>
      </HeadRow>
      <EditorBox>
        <EditorToolbar />
        <EditorText aria-label="Description" spellCheck={false} defaultValue={DESCRIPTION} />
        <EditorStatus>
          <ResizeGrip />
        </EditorStatus>
      </EditorBox>
      <Notes>
        <Heading>Notes</Heading>
        <p>
          <MdError size={14} />
          These notes are private and are not visible to the customer.
        </p>
        <EditorBox>
          <EditorToolbar />
          <EditorText aria-label="Notes" />
        </EditorBox>
      </Notes>
    </section>
  );
}

function SalesTable() {
  return (
    <DataTable>
      <colgroup>
        <col />
        <col width="126" />
        <col width="126" />
        <col width="127" />
      </colgroup>
      <thead>
        <tr>
          <th className="name">Description</th>
          <th>Quantity</th>
          <th>Item Sell</th>
          <th>Total</th>
        </tr>
      </thead>
      <tbody>
        {SALES.map(([name, ...cells]) => (
          <tr key={name}>
            <td className="name">{name}</td>
            {cells.map((cell, index) => (
              <td key={index}>{cell}</td>
            ))}
          </tr>
        ))}
      </tbody>
    </DataTable>
  );
}

function CostTable() {
  return (
    <DataTable>
      <colgroup>
        <col width="35" />
        <col />
        <col width="140" />
        <col width="190" />
      </colgroup>
      <thead>
        <tr>
          <th />
          <th className="name">Item</th>
          <th>Actual</th>
          <th>Estimate</th>
        </tr>
      </thead>
      <tbody>
        {COSTS.map((row) => (
          <MoneyRow key={row.name} $good={row.good} $edit={row.edit} $shaded={row.shaded}>
            <td>
              {row.edit && (
                <EditButton aria-label={`Edit ${row.name}`}>
                  <MdEdit size={18} />
                </EditButton>
              )}
              {row.expandable && (
                <svg width="9" height="11" viewBox="0 0 9 11">
                  <path d="M0 0v11l9-5.500Z" fill="#999" />
                </svg>
              )}
            </td>
            <td className="name">{row.name}</td>
            <td className="actual">{row.actual}</td>
            <td>{row.estimate}</td>
          </MoneyRow>
        ))}
      </tbody>
    </DataTable>
  );
}

function PartsPanel() {
  return (
    <section>
      <HeadRow>
        <Heading>Parts &amp; Labour</Heading>
        <LockLinks>
          <a href="#estimates">
            <MdLock size={15} />
            Lock Estimates &amp; Price
          </a>
          <a href="#items">
            <MdLock size={15} />
            Lock Items &amp; Price
          </a>
        </LockLinks>
      </HeadRow>
      <TableStack>
        <SalesTable />
        <CostTable />
      </TableStack>
    </section>
  );
}

function ActivityPanel() {
  return (
    <Activity>
      <ActivityHead>Activity</ActivityHead>
      <ActivityBody>
        <Heading>Last Schedule</Heading>
        <TimelineHead>
          <Heading>Timeline</Heading>
          <a href="#all">All</a>
          <StarMark size={18} ring="#219cff" star="#fff" />
        </TimelineHead>
        <TimelineItem>
          <Avatar>
            <StarMark size={17} ring="#219cff" star="#fff" />
          </Avatar>
          <Pointer />
          <TimelineCard>
            <a href="#entry">Reem Saba (25/06/2026) - System</a>
            Job created.
          </TimelineCard>
        </TimelineItem>
      </ActivityBody>
    </Activity>
  );
}

function TopHeader() {
  return (
    <TopBar>
      <CompanyName>
        <MdBusiness size={25} />
        Elephants Foot Servic...
      </CompanyName>
      <JobTab>
        <FaWrench size={17} />
        <span>New Job (M On Mar...</span>
      </JobTab>
      <SearchBox>
        <input type="text" placeholder="Search" aria-label="Search" />
        <Line size={20} w={3}>
          <circle cx="10" cy="10" r="7" />
          <path d="m15.500 15.500 5.500 5.500" />
        </Line>
      </SearchBox>
      <BookmarkButton aria-label="Bookmarks">
        <MdBookmarkBorder size={26} />
      </BookmarkButton>
      <TopIcons>
        <TopIcon $w={40} aria-label="Notifications">
          <MdAddAlert size={26} />
          <AlertBadge>99+</AlertBadge>
        </TopIcon>
        <TopIcon $w={34} aria-label="Announcements">
          <Megaphone />
        </TopIcon>
        <TopIcon aria-label="Help">
          <MdHelp size={26} />
        </TopIcon>
        <TopIcon aria-label="Settings">
          <MdSettings size={26} />
        </TopIcon>
        <TopIcon aria-label="Account">
          <MdAccountCircle size={26} />
        </TopIcon>
      </TopIcons>
    </TopBar>
  );
}

function JobInfo() {
  return (
    <InfoRow>
      <InfoLabel>Customer:</InfoLabel>
      <InfoValue>
        <a href="#customer">M On Mary CTS 38195</a>
        <small>
          [<a href="#change-customer">Change</a>]
        </small>
      </InfoValue>
      <InfoLabel>Site:</InfoLabel>
      <InfoValue>
        <a href="#site">70 MARY STREET Brisbane</a>
        <small>
          [<a href="#change-site">Change</a>]
        </small>
      </InfoValue>
      <InfoLabel>
        Job
        <br />
        Total:
      </InfoLabel>
      <InfoValue $right>$160.00</InfoValue>
      <InfoLabel>
        Assigned
        <br />
        Technicians:
      </InfoLabel>
      <InfoValue>Big Tree Enterpriser Pty Ltd - MIKE</InfoValue>
      <InfoLabel>
        Job
        <br />
        Status:
      </InfoLabel>
      <InfoValue>
        <StatusDot $size={22} />
        &nbsp; Job : New
        <br />
        Job
      </InfoValue>
      <RoundButton aria-label="Show more">
        <Caret size={9} />
      </RoundButton>
    </InfoRow>
  );
}

function NavLinks({ names }) {
  return names.map((name, index) => (
    <SidebarLink key={name} href={`#${name}`} aria-label={name} $gap={index % 2}>
      <NavIcon name={name} />
    </SidebarLink>
  ));
}

function SimproPage() {
  return (
    <PageFrame>
      <Sidebar>
        <SidebarLogo href="#home" aria-label="Home">
          <StarMark size={36} ring="#fff" star="#1976d2" />
        </SidebarLogo>
        <NavLinks names={TOP_NAV} />
        <SidebarRule />
        <NavLinks names={BOTTOM_NAV} />
        <SidebarExpand aria-label="Expand menu">
          <svg width="28" height="28" viewBox="0 0 28 28" fill="none" stroke="#fff" strokeWidth="4">
            <path d="m1.500 1.500 12.500 12.500L1.500 26.500M13 1.500 25.500 14 13 26.500" />
          </svg>
        </SidebarExpand>
      </Sidebar>
      <Page>
        <TopHeader />
        <Content>
          <TitleRow>
            <Breadcrumb>
              <StatusDot $size={18} />
              <span>
                <a href="#job">New Service Job - chute breakdown</a> / <a href="#centres">Cost Centres</a> / Service QLD
              </span>
            </Breadcrumb>
            <Actions>
              <ActionButton $bg="#d4d5d6" $fg="#212529">
                CANCEL
              </ActionButton>
              <ActionButton $bg="#1976d2">SAVE</ActionButton>
              <SplitButton>
                <ActionButton $bg="#42b455" $w={158}>
                  SAVE AND FINISH
                </ActionButton>
                <ActionButton $bg="#42b455" $w={33} aria-label="More save options">
                  ▼
                </ActionButton>
              </SplitButton>
            </Actions>
          </TitleRow>
          <MainTabs>
            <MainTab href="#details" $on>
              Details
            </MainTab>
            <MainTab href="#parts">Parts &amp; Labour</MainTab>
            <MainTab href="#stock">Stock</MainTab>
            <MainTab href="#schedule">Schedule</MainTab>
            <MainTab href="#assets">Customer Assets</MainTab>
          </MainTabs>
          <SubTabs>
            <SubTab href="#summary" $on $dark>
              Summary
            </SubTab>
            <SubTab href="#settings">Settings</SubTab>
            <SubTab href="#attachments" $dark>
              Attachments
            </SubTab>
            <SubTab href="#contractor">Contractor</SubTab>
          </SubTabs>
          <JobInfo />
          <Columns>
            <Work>
              <PageHeading>Summary</PageHeading>
              <Split>
                <DescriptionPanel />
                <PartsPanel />
              </Split>
            </Work>
            <ActivityPanel />
          </Columns>
        </Content>
        <ScrollPad>
          <button aria-label="Scroll to top">
            <Caret size={13} up />
          </button>
          <button aria-label="Scroll to bottom">
            <Caret size={13} />
          </button>
        </ScrollPad>
      </Page>
      <Scrollbar>
        <Caret up />
        <ScrollThumb />
        <Caret />
      </Scrollbar>
    </PageFrame>
  );
}

function WindowsTaskbar() {
  return (
    <Taskbar>
      <Weather>
        <WeatherIcon>
          <svg width="31" height="36" viewBox="0 0 31 36">
            <path d="M3 22q6 3 12-1 5-4 6-8 6 3 6 9-1 9-11 10Q6 32 3 22Z" fill="#ea9a2c" />
            <path d="M4 14q-4 0-4-4t4-4q2-4 6-3t5 4q3 1 3 4t-4 3Z" fill="#a9cdee" />
            <path d="M17 31q-4 0-4-4t4-4q2-4 6-3t5 4q3 1 3 4t-4 3Z" fill="#bcd8f2" />
          </svg>
          <Badge $bg="#c42b1c" $right={-1} $top={-2}>
            1
          </Badge>
        </WeatherIcon>
        <div>
          71°F
          <small>Partly cloudy</small>
        </div>
      </Weather>
      <TaskApps>
        <TaskButton aria-label="Start">
          <AppIcon name="start" />
        </TaskButton>
        <TaskSearch>
          <Line size={19} w={2.4}>
            <circle cx="11" cy="10" r="8" />
            <path d="m16.500 16.500 6 6" />
          </Line>
          <input type="text" placeholder="Search" />
        </TaskSearch>
        <TaskButton aria-label="Task view">
          <AppIcon name="taskview" />
        </TaskButton>
        <TaskButton $open aria-label="Teams">
          <AppIcon name="teams" />
          <Badge $bg="#c42b1c" $top={2}>
            3
          </Badge>
        </TaskButton>
        <TaskButton $active aria-label="Edge">
          <AppIcon name="edge" />
        </TaskButton>
        <TaskButton aria-label="File Explorer">
          <AppIcon name="files" />
        </TaskButton>
        <TaskButton aria-label="Store">
          <AppIcon name="store" />
          <Badge $bg="#0a7bd6" $top={2}>
            1
          </Badge>
        </TaskButton>
        <TaskButton aria-label="TeamViewer">
          <AppIcon name="teamviewer" />
        </TaskButton>
        <TaskButton aria-label="Copilot">
          <CopilotMark size={30} />
        </TaskButton>
        <TaskButton $open aria-label="Outlook">
          <AppIcon name="outlook" />
          <Badge $bg="#0f63b5" $top={2}>
            <svg width="13" height="10" viewBox="0 0 13 10" fill="none" stroke="#fff" strokeWidth="1.2">
              <path d="M.7.7h11.600v8.600H.7ZM.7 1.500l5.800 4 5.800-4" />
            </svg>
          </Badge>
        </TaskButton>
        <TaskButton $open aria-label="Word">
          <AppIcon name="word" />
        </TaskButton>
        <TaskButton $open aria-label="Chrome">
          <AppIcon name="chrome" />
        </TaskButton>
        <TaskButton $open aria-label="Glitter AI">
          <AppIcon name="glitter" />
        </TaskButton>
      </TaskApps>
      <Clock>
        2:55 AM
        <br />
        6/25/2026
      </Clock>
    </Taskbar>
  );
}

export default function App() {
  return (
    <Screen>
      <GlobalStyle />
      <Browser />
      <SimproPage />
      <WindowsTaskbar />
    </Screen>
  );
}
